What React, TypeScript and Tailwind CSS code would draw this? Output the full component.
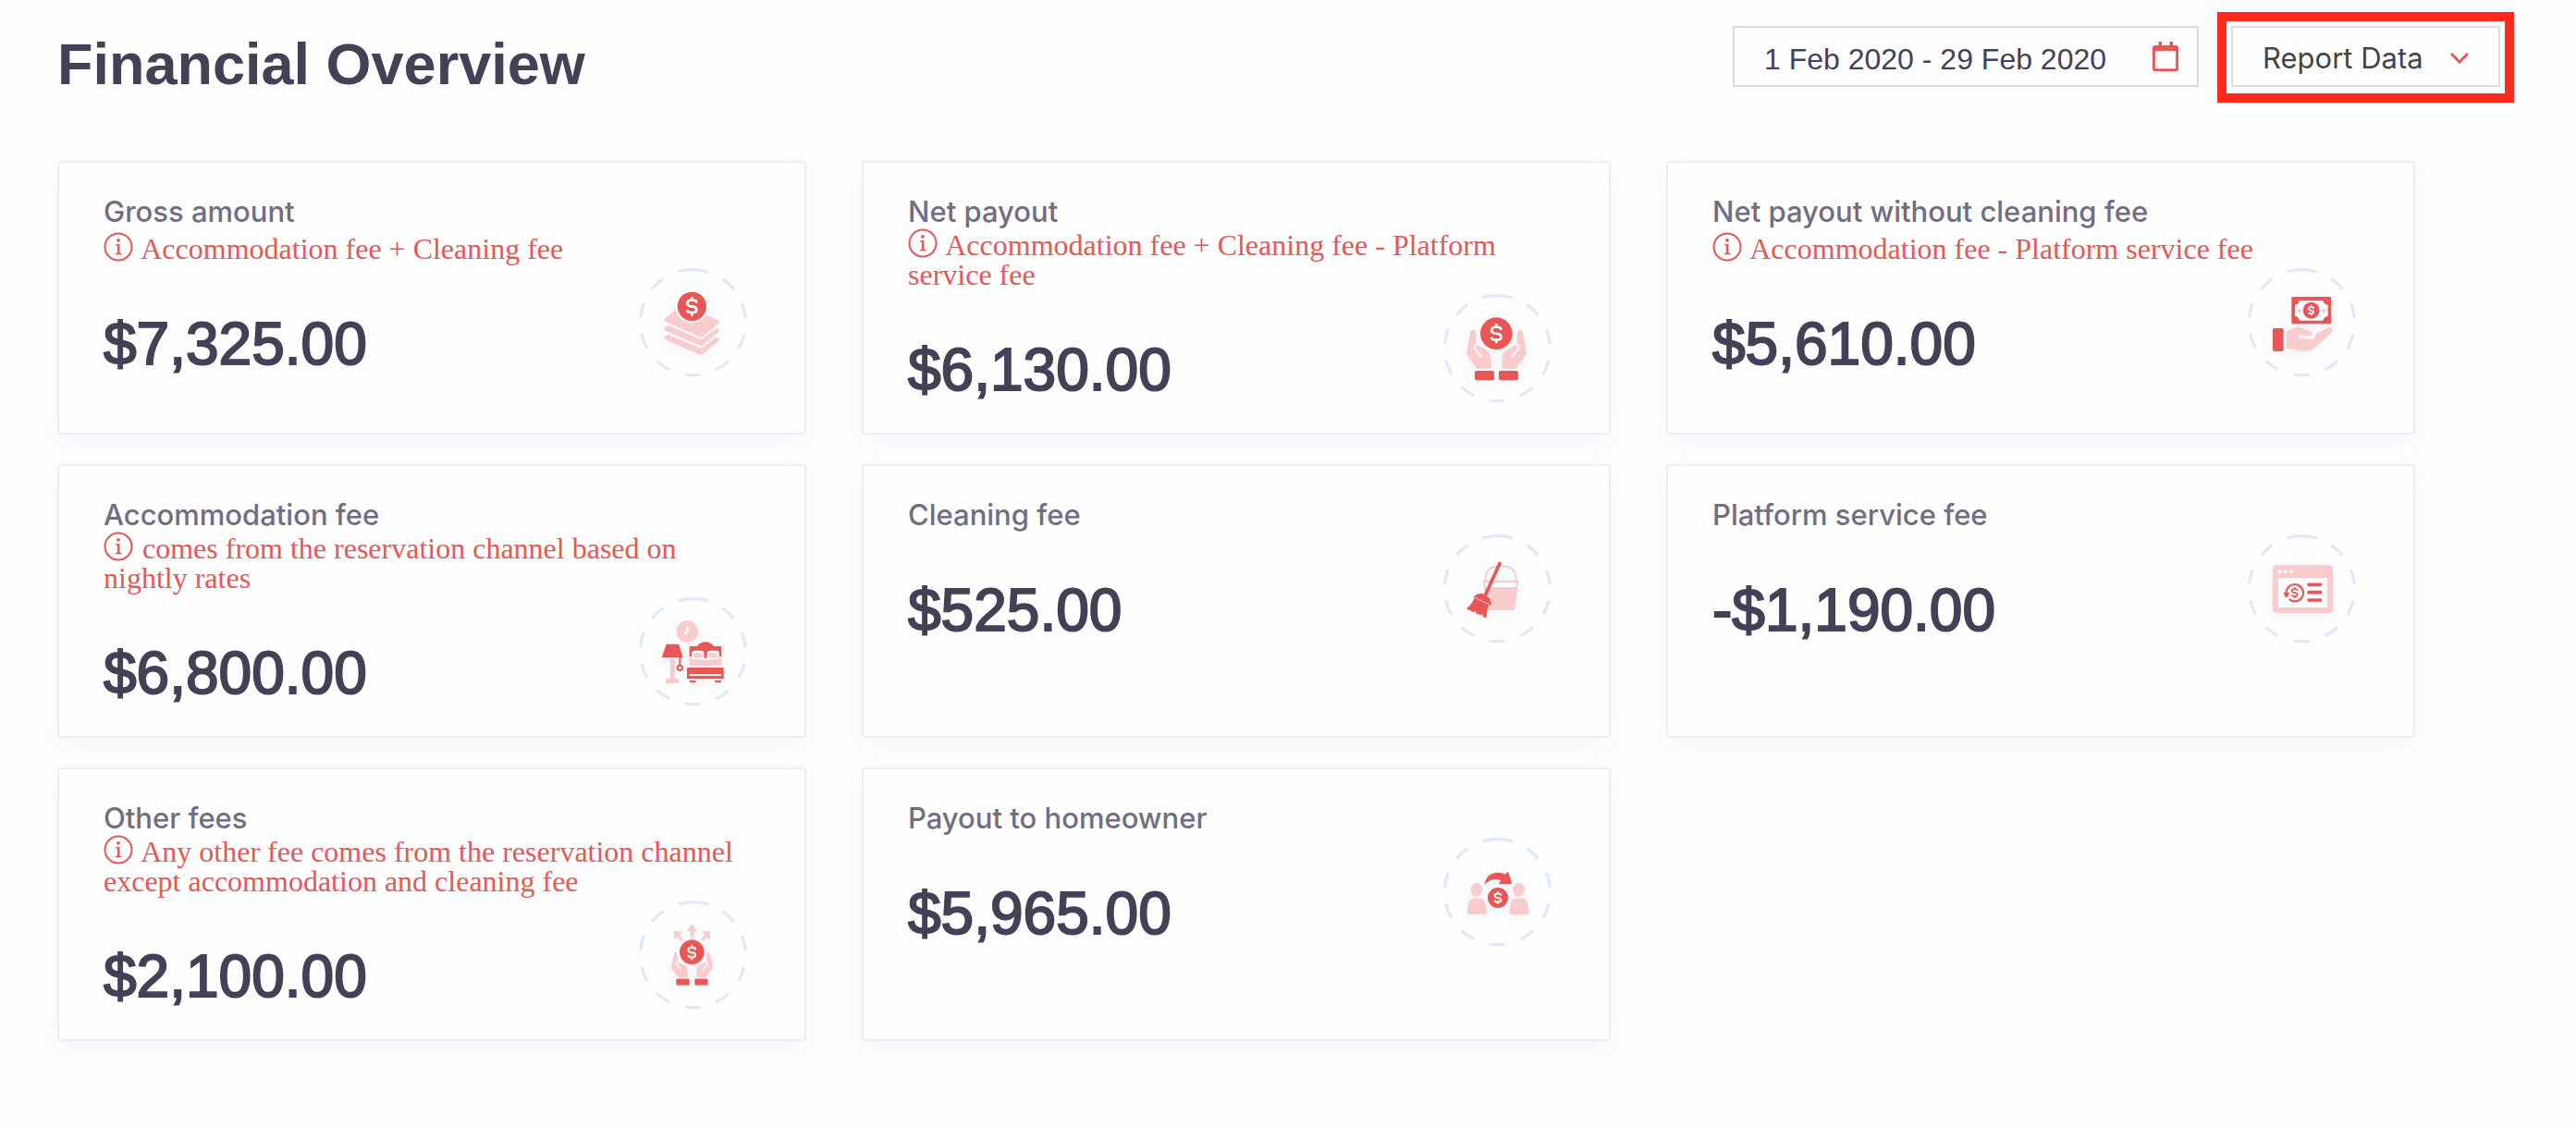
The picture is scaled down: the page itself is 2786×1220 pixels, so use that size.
import type { ReactNode } from "react";

const RED = "#e95656";
const PINK = "#f8cbcd";
const PAPER = "#fdfdff";

/* Dollar sign centred on (x, y), about 62 units tall at scale 1. */
function Dollar({ x, y, scale = 1, color = "#fff", weight = 8 }: { x: number; y: number; scale?: number; color?: string; weight?: number }) {
  return (
    <path
      transform={`translate(${x} ${y}) scale(${scale})`}
      d="M15-11C15-17 10-20 4-20H-4C-10-20-15-16-15-10C-15-4-10-1-4 0L4 1C11 2 15 5 15 11C15 17 10 20 4 20H-4C-10 20-15 17-15 12M0-31V-20M0 20V31"
      fill="none"
      stroke={color}
      strokeWidth={weight}
    />
  );
}

function Ring({ top, children }: { top: number; children: ReactNode }) {
  return (
    <svg viewBox={`57 ${top} 360 360`} className="size-[120px] shrink-0" aria-hidden="true">
      <circle
        cx="238"
        cy={top + 179}
        r="171"
        fill="none"
        stroke="#dfe9fe"
        strokeWidth="10"
        strokeDasharray="50 52.4"
        transform={`rotate(-90 238 ${top + 179})`}
      />
      <g className="drop-shadow-[0_6px_24px_rgba(50,70,140,0.07)]">{children}</g>
    </svg>
  );
}

function Hand() {
  return (
    <>
      <path
        fill={PINK}
        d="M150 180Q151 170 159 170Q168 170 168 181L170 219Q177 218 184 224L208 240Q216 246 216 254L219 294Q219 296 216 296H172L140 251Q137 246 139 240Z"
      />
      <path d="M185 257L167 234Q160 223 169 218Q178 214 188 223" fill="none" stroke={PAPER} strokeWidth="6" strokeLinecap="round" />
    </>
  );
}

function StackIcon() {
  return (
    <Ring top={57}>
      <g fill={PINK}>
        <path d="M148 226L180 196L235 200L290 216L321 230Q326 233 322 237L271 282Q267 286 262 283L148 233Q145 230 148 226Z" />
        <path d="M147 252L157 246L262 291Q267 293 271 289L314 255L323 260V264L271 310Q267 314 262 312L147 262Z" />
        <path d="M147 281L157 275L262 320Q267 322 271 318L312 284L323 289V294L271 339Q267 343 262 341L147 291Z" />
      </g>
      <circle cx="235" cy="184" r="54" fill={PAPER} />
      <circle cx="235" cy="184" r="47" fill={RED} />
      <Dollar x={235} y={184} />
    </Ring>
  );
}

function HandsCoinIcon() {
  return (
    <Ring top={51}>
      <Hand />
      <g transform="translate(471 0) scale(-1 1)">
        <Hand />
      </g>
      <circle cx="235" cy="182" r="52" fill={RED} />
      <Dollar x={235} y={182} scale={1.03} weight={7} />
      <rect x="165" y="303" width="63" height="31" rx="6" fill={RED} />
      <rect x="243" y="303" width="63" height="31" rx="6" fill={RED} />
    </Ring>
  );
}

function HandBillIcon() {
  return (
    <Ring top={57}>
      <rect x="205" y="153" width="128" height="88" rx="4" fill={RED} />
      <path fill={PAPER} d="M231 165H307Q309 177 323 180V215Q310 218 307 230H231Q229 218 216 215V180Q229 177 231 165Z" />
      <circle cx="269" cy="197" r="27" fill={RED} />
      <Dollar x={269} y={197} scale={0.52} weight={10} />
      <circle cx="230" cy="198" r="6.500" fill={PINK} />
      <circle cx="309" cy="198" r="6.500" fill={PINK} />
      <rect x="144" y="255" width="35" height="75" rx="6" fill={RED} />
      <path
        fill={PINK}
        d="M189 264L212 254Q224 249 236 254L266 265Q274 268 273 276Q271 281 262 280L232 277Q226 278 227 283Q228 287 234 288L266 292Q283 291 284 273L320 255Q330 249 336 256Q341 263 333 271L280 318Q266 331 248 329L189 320Z"
      />
    </Ring>
  );
}

function BedroomIcon() {
  return (
    <Ring top={45}>
      <circle cx="220" cy="159" r="35" fill={PINK} />
      <path d="M220 146V157Q219 163 213 164" fill="none" stroke={PAPER} strokeWidth="7" strokeLinecap="round" />
      <path d="M152 200H192L206 243H137Z" fill={RED} />
      <path d="M165 249H179V312H187Q192 312 192 317V327H150V317Q150 312 155 312H165Z" fill={PINK} />
      <path d="M196 242V267" stroke={RED} strokeWidth="6" />
      <circle cx="196" cy="277" r="8" fill={PAPER} stroke={RED} strokeWidth="6" />
      <path d="M227 241V211Q227 207 231 207H252Q261 193 279 193Q297 193 306 207H327Q331 207 331 211V241Z" fill={RED} />
      <path d="M234 244V231Q234 221 244 221H264Q274 221 275 230V247H284V230Q285 221 294 221H314Q324 221 324 231V244L279 253Z" fill={PAPER} />
      <path d="M241 243V233Q241 228 247 228H262Q269 228 270 234V243Q254 246 241 243ZM289 243V234Q290 228 296 228H311Q317 228 317 233V243Q303 246 289 243Z" fill={PINK} />
      <path d="M275.500 222H282.500V246H275.500Z" fill={RED} />
      <path d="M227 245Q279 258 331 245V270H227Z" fill={PINK} />
      <rect x="219" y="276" width="119" height="37" rx="2" fill={RED} />
      <rect x="227" y="297" width="103" height="6" fill={PAPER} />
      <path d="M227 318H248V322Q248 325 244 325H232Q227 325 227 321ZM309 318H330V322Q330 325 326 325H314Q309 325 309 321Z" fill={RED} />
    </Ring>
  );
}

function BroomIcon() {
  return (
    <Ring top={51}>
      <g fill="none" stroke={PINK} strokeWidth="6">
        <path d="M201 206V190Q204 157 249 157Q294 157 298 190V206" />
        <path d="M195 207H304L291 296H207Z" fill={PAPER} />
      </g>
      <path d="M196 225H303L293 296Q292 300 288 300H205Z" fill={PINK} />
      <path d="M246 148L200 250" stroke={RED} strokeWidth="11" strokeLinecap="round" />
      <path
        d="M161 258Q171 243 192 247Q217 256 219 283Q215 284 210 281L164 261ZM164 261L211 282Q204 299 203 322Q202 326 198 324L190 319L193 312L183 316L168 309L169 303L161 306L141 297Q137 295 141 292Q154 282 164 261Z"
        fill={RED}
      />
      <path d="M164 259L212 281" stroke={PAPER} strokeWidth="2" />
    </Ring>
  );
}

function RefundWindowIcon() {
  return (
    <Ring top={51}>
      <rect x="144" y="154" width="195" height="155" rx="12" fill={PINK} />
      <rect x="162" y="195" width="159" height="96" fill="#fafbff" />
      <g fill={PAPER}>
        <circle cx="167" cy="175" r="6" />
        <circle cx="185" cy="175" r="6" />
        <circle cx="203" cy="175" r="6" />
      </g>
      <path d="M188 243A27.500 27.500 0 1 1 197 264" fill="none" stroke={RED} strokeWidth="6.500" />
      <path d="M179 242H198L193 257H184Z" fill={RED} />
      <Dollar x={215} y={243} scale={0.58} color={RED} weight={9} />
      <path d="M261 217H299M261 242H299M261 267H299" stroke={RED} strokeWidth="11" strokeLinecap="round" />
    </Ring>
  );
}

function HandsArrowsIcon() {
  return (
    <Ring top={54}>
      <g fill={PINK}>
        <path d="M235 135Q238 135 240 139L250 153Q252 157 248 157H241V177H230V157H223Q219 157 221 153L231 139Q233 135 235 135Z" />
        <path d="M177 156L200 157Q203 158 201 161L196 167L207 184L200 190L188 175L182 181Q178 182 177 178Z" />
        <path d="M294 156L271 157Q268 158 270 161L276 167L264 182L271 189L283 175L289 181Q293 182 294 178Z" />
      </g>
      <g transform="translate(76 115) scale(.667 .645)">
        <Hand />
      </g>
      <g transform="translate(395 115) scale(-.667 .645)">
        <Hand />
      </g>
      <circle cx="235" cy="224" r="40" fill={RED} />
      <Dollar x={235} y={225} scale={0.76} weight={8} />
      <rect x="184" y="311" width="43" height="21" rx="4" fill={RED} />
      <rect x="244" y="311" width="43" height="21" rx="4" fill={RED} />
    </Ring>
  );
}

function Person() {
  return (
    <g fill={PINK}>
      <ellipse cx="171" cy="217" rx="19" ry="22" />
      <path d="M145 256Q150 245 164 245H179Q194 245 198 256L204 290Q204 297 198 297H146Q140 297 140 290Z" />
    </g>
  );
}

function TransferIcon() {
  return (
    <Ring top={45}>
      <Person />
      <g transform="translate(137 0)">
        <Person />
      </g>
      <circle cx="240" cy="243" r="33" fill={RED} />
      <Dollar x={240} y={243} scale={0.66} weight={9} />
      <path d="M197 199Q203 162 240 161Q254 161 264 167L271 159Q274 158 275 162L285 195Q285 199 281 199H246Q241 198 244 194L250 187Q221 175 200 197Z" fill={RED} />
    </Ring>
  );
}

function InfoIcon() {
  return (
    <svg viewBox="0 0 32 32" className="-mt-2 mr-[2px] inline-block size-8 align-[-3px]" aria-hidden="true">
      <circle cx="16" cy="16" r="14.500" fill="none" stroke={RED} strokeWidth="2" />
      <circle cx="16" cy="8.800" r="1.900" fill={RED} />
      <path d="M12.800 13.500L17.400 12.700V22.600L19.600 23.200V24.200H12.800V23.200L14.900 22.600V14.700L12.800 14.400Z" fill={RED} />
    </svg>
  );
}

type CardData = { label: string; amount: string; note?: string; long?: boolean; icon: ReactNode };

const cards: CardData[] = [
  { label: "Gross amount", note: "Accommodation fee + Cleaning fee", amount: "$7,325.00", icon: <StackIcon /> },
  { label: "Net payout", note: "Accommodation fee + Cleaning fee - Platform service fee", long: true, amount: "$6,130.00", icon: <HandsCoinIcon /> },
  { label: "Net payout without cleaning fee", note: "Accommodation fee - Platform service fee", amount: "$5,610.00", icon: <HandBillIcon /> },
  { label: "Accommodation fee", note: "comes from the reservation channel based on nightly rates", long: true, amount: "$6,800.00", icon: <BedroomIcon /> },
  { label: "Cleaning fee", amount: "$525.00", icon: <BroomIcon /> },
  { label: "Platform service fee", amount: "-$1,190.00", icon: <RefundWindowIcon /> },
  { label: "Other fees", note: "Any other fee comes from the reservation channel except accommodation and cleaning fee", long: true, amount: "$2,100.00", icon: <HandsArrowsIcon /> },
  { label: "Payout to homeowner", amount: "$5,965.00", icon: <TransferIcon /> },
];

function Card({ label, note, long, amount, icon }: CardData) {
  return (
    <article className="rounded-[4px] border-2 border-[#e9eff7] bg-[#fefefe] pt-[33px] pr-[61px] pb-[31px] pl-12 shadow-[0_8px_24px_rgba(70,100,180,0.05)]">
      <h2 className="font-['Inter',sans-serif] text-[31px] leading-10 font-medium text-[#716d82]">{label}</h2>
      {note && (
        <p className={`-mr-3 font-['Liberation_Serif',serif] text-[32px] leading-8 text-[#e95656] ${long ? "pb-1" : "py-1"}`}>
          <InfoIcon /> {note}
        </p>
      )}
      <div className="flex items-start justify-between">
        <p className="pt-[51px] font-['Liberation_Sans',sans-serif] text-[64px] leading-[64px] text-[#454056] [-webkit-text-stroke:2px_#454056]">
          {amount}
        </p>
        {icon}
      </div>
    </article>
  );
}

export default function App() {
  return (
    <main className="min-h-screen bg-[#fefefe] pt-[13px] pr-[67px] pb-24 pl-[62px]">
      <header className="flex items-start justify-between">
        <h1 className="mt-6 font-['Liberation_Sans',sans-serif] text-[63px] leading-[64px] font-bold text-[#454056]">Financial Overview</h1>
        <div className="flex items-start gap-5">
          <div className="mt-[15px] flex h-[66px] w-[504px] items-center border-2 border-[#dcdcdc] bg-[#fefefe] pr-5 pl-8">
            <input
              type="text"
              readOnly
              aria-label="Date range"
              value="1 Feb 2020 - 29 Feb 2020"
              className="min-w-0 flex-1 bg-transparent pt-[6px] font-['Liberation_Sans',sans-serif] text-[32px] leading-10 text-[#454056] outline-none"
            />
            <svg viewBox="0 0 28 32" className="h-8 w-7 shrink-0" aria-hidden="true">
              <path d="M6.500 0H10V4H18.500V0H22V4H25.500Q28 4 28 6.500V29.500Q28 32 25.500 32H2.500Q0 32 0 29.500V6.500Q0 4 2.500 4H6.500ZM2.800 10V29.200H25.200V10Z" fill={RED} fillRule="evenodd" />
            </svg>
          </div>
          <div className="border-10 border-[#ff2a1c] px-[5px] pt-[5px] pb-[7px]">
            <button type="button" className="flex h-[66px] w-[291px] items-center justify-between border-2 border-[#dcdcdc] bg-[#fefefe] px-8 pt-1 font-['Inter',sans-serif] text-[31px] leading-10 text-[#444444]">
              Report Data
              <svg viewBox="0 0 20 12" className="h-3 w-5" aria-hidden="true">
                <path d="M1 1L10 10L19 1" fill="none" stroke={RED} strokeWidth="3" />
              </svg>
            </button>
          </div>
        </div>
      </header>
      <section aria-label="Totals" className="mt-[63px] mr-[107px] grid grid-cols-3 gap-x-15 gap-y-8">
        {cards.map((card) => (
          <Card key={card.label} {...card} />
        ))}
      </section>
    </main>
  );
}
